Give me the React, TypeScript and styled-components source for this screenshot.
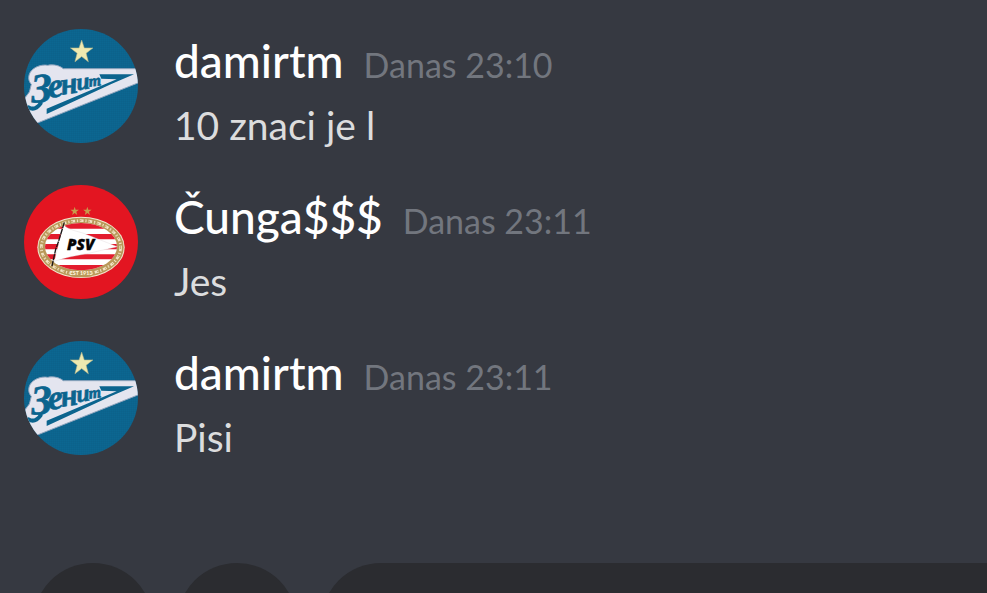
import React from "react";
import styled, { createGlobalStyle } from "styled-components";

const GlobalStyle = createGlobalStyle`
  body {
    margin: 0;
    background: #363941;
  }
`;

const Screen = styled.main`
  display: flex;
  flex-direction: column;
  height: 100vh;
  overflow: hidden;
  background: #363941;
  font-family: Lato, "Noto Sans", sans-serif;
`;

const MessageList = styled.ol`
  display: flex;
  flex-direction: column;
  gap: 28px;
  margin: 0;
  padding: 29px 24px 94px;
  list-style: none;
`;

const MessageRow = styled.li`
  display: flex;
  align-items: flex-start;
  gap: 36px;
`;

const Avatar = styled.svg`
  flex: none;
  width: 114px;
  height: 114px;
  border-radius: 50%;
`;

const Body = styled.div`
  flex: 1;
  min-width: 0;
`;

const Header = styled.header`
  display: flex;
  align-items: baseline;
  gap: 20px;
  height: 64px;
  line-height: 64px;
`;

const Author = styled.span`
  color: #ffffff;
  font-size: 46px;
  font-weight: 500;
`;

const Time = styled.time`
  color: #72767e;
  font-size: 34px;
`;

const Text = styled.p`
  margin: 0;
  color: #dcddde;
  font-size: 39px;
  line-height: 64px;
`;

const Composer = styled.form`
  display: flex;
  flex: none;
  gap: 24px;
  padding-left: 33px;
`;

const RoundButton = styled.button`
  flex: none;
  width: 120px;
  height: 120px;
  padding: 0;
  border: 0;
  border-radius: 50%;
  background: #2b2c30;
`;

const Field = styled.input`
  flex: 1;
  min-width: 0;
  height: 120px;
  box-sizing: border-box;
  padding: 0 48px;
  border: 0;
  border-radius: 60px 0 0 60px;
  background: #2b2c30;
  color: #dcddde;
  font: inherit;
  font-size: 39px;
`;

const STAR = "0,-30 7,-9 30,-9 12,5 18,28 0,14 -18,28 -12,5 -30,-9 -7,-9";

function ZenitAvatar() {
  return (
    <Avatar viewBox="30 27 342 342" role="img" aria-label="Zenit">
      <defs>
        <pattern id="weave" width="6" height="6" patternUnits="userSpaceOnUse">
          <rect width="6" height="6" fill="#0c6791" />
          <path d="M0 5h6M5 0v6" stroke="#085b83" strokeWidth="1" />
        </pattern>
      </defs>
      <rect x="30" y="27" width="342" height="342" fill="url(#weave)" />
      <polygon points={STAR} transform="translate(203 94) scale(1.12)" fill="#eee9b0" stroke="#b9b98a" strokeWidth="1.5" />
      <path
        d="M374 146H148C137 137 119 132 101 136C82 132 57 142 48 158C41 173 44 184 52 193L46 216L28 240V305L70 309L374 188Z"
        fill="#e4e5ef"
        stroke="#8fa4bd"
        strokeWidth="3"
        strokeLinejoin="round"
      />
      <path d="M256 163H360L292 192L98 282V266L226 212L308 178L262 176Z" fill="#0b648e" />
      <path d="M44 262Q62 274 80 250" fill="none" stroke="#0b648e" strokeWidth="12" strokeLinecap="round" />
      <g
        fill="#0b648e"
        stroke="#0b648e"
        strokeWidth="2"
        fontFamily="'Liberation Serif', serif"
        fontStyle="italic"
        fontWeight="700"
      >
        <text transform="translate(54 248) rotate(-4)" fontSize="124">З</text>
        <text transform="translate(105 234) rotate(-8)" fontSize="104">е</text>
        <text transform="translate(143 224) rotate(-8)" fontSize="92">н</text>
        <text transform="translate(190 211) rotate(-8)" fontSize="72">и</text>
        <text transform="translate(226 200) rotate(-8)" fontSize="48">т</text>
      </g>
    </Avatar>
  );
}

function PsvAvatar() {
  return (
    <Avatar viewBox="30 27 342 342" role="img" aria-label="PSV">
      <defs>
        <clipPath id="shield">
          <ellipse cx="201" cy="212" rx="108" ry="71" />
        </clipPath>
      </defs>
      <rect x="30" y="27" width="342" height="342" fill="#e31521" />
      <polygon points={STAR} transform="translate(182 105) scale(.42)" fill="#c79a4b" />
      <polygon points={STAR} transform="translate(220 105) scale(.42)" fill="#c79a4b" />
      <ellipse cx="201" cy="214" rx="131" ry="92" fill="#f3e6d0" />
      <ellipse cx="201" cy="214" rx="128" ry="89" fill="#b9995a" />
      <ellipse cx="201" cy="214" rx="119" ry="80" fill="none" stroke="#f1e3c4" strokeWidth="8" strokeDasharray="12 5 4 5" />
      <ellipse cx="201" cy="214" rx="119" ry="80" fill="none" stroke="#b9995a" strokeWidth="3" strokeDasharray="5 8" />
      <ellipse cx="201" cy="212" rx="108" ry="71" fill="#ffffff" />
      <g clipPath="url(#shield)" fill="#e31c2d">
        <path d="M90 141H312V158H90ZM90 174H312V190H90ZM90 204H312V220H90ZM90 235H312V250H90ZM90 267H312V284H90Z" />
      </g>
      <path d="M148 146C166 163 188 165 209 172L310 212L228 231C190 239 155 243 121 256Z" fill="#ffffff" stroke="#d9cdd0" strokeWidth="1" />
      <path d="M151 139L134 195L125 220L114 270" fill="none" stroke="#1b1718" strokeWidth="4" strokeDasharray="18 2" />
      <path d="M166 284Q201 291 236 284L234 301Q201 307 168 301Z" fill="#b9995a" />
      <text x="201" y="296" textAnchor="middle" fontFamily="Lato, sans-serif" fontSize="16" fontWeight="900" fill="#fff6df">
        EST 1913
      </text>
      <text
        x="200"
        y="221"
        textAnchor="middle"
        fontFamily="'Open Sans', sans-serif"
        fontSize="46"
        fontStyle="italic"
        fontWeight="800"
        fill="#050505"
        stroke="#050505"
        strokeWidth="1"
      >
        PSV
      </text>
    </Avatar>
  );
}

type Message = {
  id: number;
  author: string;
  time: string;
  text: string;
  club: "zenit" | "psv";
};

const messages: Message[] = [
  { id: 1, author: "damirtm", time: "23:10", text: "10 znaci je l", club: "zenit" },
  { id: 2, author: "Čunga$$$", time: "23:11", text: "Jes", club: "psv" },
  { id: 3, author: "damirtm", time: "23:11", text: "Pisi", club: "zenit" },
];

export default function App() {
  return (
    <>
      <GlobalStyle />
      <Screen>
        <MessageList>
          {messages.map((message) => (
            <MessageRow key={message.id}>
              {message.club === "zenit" ? <ZenitAvatar /> : <PsvAvatar />}
              <Body>
                <Header>
                  <Author>{message.author}</Author>
                  <Time dateTime={message.time}>Danas {message.time}</Time>
                </Header>
                <Text>{message.text}</Text>
              </Body>
            </MessageRow>
          ))}
        </MessageList>
        <Composer>
          <RoundButton type="button" aria-label="Attach" />
          <RoundButton type="button" aria-label="Gift" />
          <Field type="text" aria-label="Message" />
        </Composer>
      </Screen>
    </>
  );
}
